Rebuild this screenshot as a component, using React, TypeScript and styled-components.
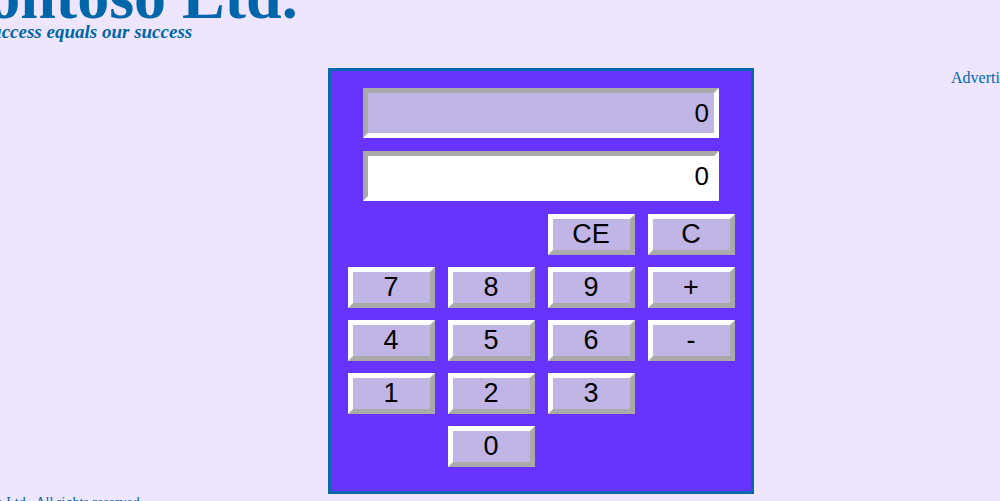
import React from "react";
import styled, { createGlobalStyle } from "styled-components";

const Global = createGlobalStyle`
  html, body {
    margin: 0;
    padding: 0;
    background: #eee6ff;
    overflow: hidden;
  }
  body {
    font-family: "Liberation Serif", serif;
    color: #0066aa;
  }
`;

const Page = styled.div`
  width: 1120px;
  margin: -28px 0 0 -58px;
`;

const Header = styled.header`
  display: flex;
  flex-direction: column;
`;

const Title = styled.h1`
  margin: 0;
  font-family: "Liberation Serif", serif;
  font-weight: bold;
  font-size: 64px;
  line-height: 50px;
  color: #0066aa;
`;

const Tagline = styled.div`
  font-family: "Liberation Serif", serif;
  font-weight: bold;
  font-style: italic;
  font-size: 19px;
  line-height: 20px;
  color: #0066aa;
`;

const Main = styled.main`
  display: flex;
  align-items: flex-start;
  padding: 26px 0 0 386px;
`;

const Calculator = styled.div`
  box-sizing: border-box;
  width: 426px;
  height: 426px;
  border: 3px solid #0668a8;
  background: #6633ff;
  padding: 17px 0 24px;
  display: flex;
  flex-direction: column;
  align-items: center;
`;

const Display = styled.div<{ $primary?: boolean }>`
  box-sizing: border-box;
  width: 356px;
  height: 50px;
  margin-top: ${(p) => (p.$primary ? "0" : "13px")};
  border-style: solid;
  border-width: 5px;
  border-color: #aaaaaa #ffffff #ffffff #aaaaaa;
  background: ${(p) => (p.$primary ? "#c0b5e5" : "#ffffff")};
  display: flex;
  align-items: center;
  justify-content: flex-end;
  padding-right: 5px;
  font-family: "Liberation Sans", Arial, sans-serif;
  font-size: 26px;
  color: #000;
`;

const Keys = styled.div`
  margin-top: 13px;
  display: grid;
  grid-template-columns: repeat(4, 87px);
  grid-auto-rows: 41px;
  column-gap: 13px;
  row-gap: 12px;
`;

const Key = styled.button<{ $col: number; $row: number }>`
  grid-column: ${(p) => p.$col};
  grid-row: ${(p) => p.$row};
  box-sizing: border-box;
  width: 87px;
  height: 41px;
  margin: 0;
  padding: 0;
  border-style: solid;
  border-width: 5px;
  border-color: #ffffff #aaaaaa #aaaaaa #ffffff;
  background: #c0b5e5;
  font-family: "Liberation Sans", Arial, sans-serif;
  font-size: 27px;
  line-height: 1;
  color: #000;
  display: flex;
  align-items: center;
  justify-content: center;
  cursor: pointer;
`;

const Aside = styled.aside`
  margin-left: 197px;
  padding-top: 1px;
  font-family: "Liberation Serif", serif;
  font-size: 16px;
  line-height: 18px;
  color: #0066aa;
  white-space: nowrap;
`;

const Footer = styled.footer`
  margin-top: 1px;
  font-family: "Liberation Serif", serif;
  font-size: 14px;
  line-height: 16px;
  color: #0066aa;
  white-space: pre;
`;

const rows: { label: string; col: number }[][] = [
  [
    { label: "CE", col: 3 },
    { label: "C", col: 4 },
  ],
  [
    { label: "7", col: 1 },
    { label: "8", col: 2 },
    { label: "9", col: 3 },
    { label: "+", col: 4 },
  ],
  [
    { label: "4", col: 1 },
    { label: "5", col: 2 },
    { label: "6", col: 3 },
    { label: "-", col: 4 },
  ],
  [
    { label: "1", col: 1 },
    { label: "2", col: 2 },
    { label: "3", col: 3 },
  ],
  [{ label: "0", col: 2 }],
];

export default function App() {
  return (
    <>
      <Global />
      <Page>
        <Header>
          <Title>Contoso Ltd.</Title>
          <Tagline>Your success equals our success</Tagline>
        </Header>
        <Main>
          <Calculator>
            <Display $primary>0</Display>
            <Display>0</Display>
            <Keys>
              {rows.map((row, ri) =>
                row.map((k) => (
                  <Key key={`${ri}-${k.label}`} $col={k.col} $row={ri + 1}>
                    {k.label}
                  </Key>
                ))
              )}
            </Keys>
          </Calculator>
          <Aside>Advertisement</Aside>
        </Main>
        <Footer>{"© Contoso Ltd.  All rights reserved"}</Footer>
      </Page>
    </>
  );
}
